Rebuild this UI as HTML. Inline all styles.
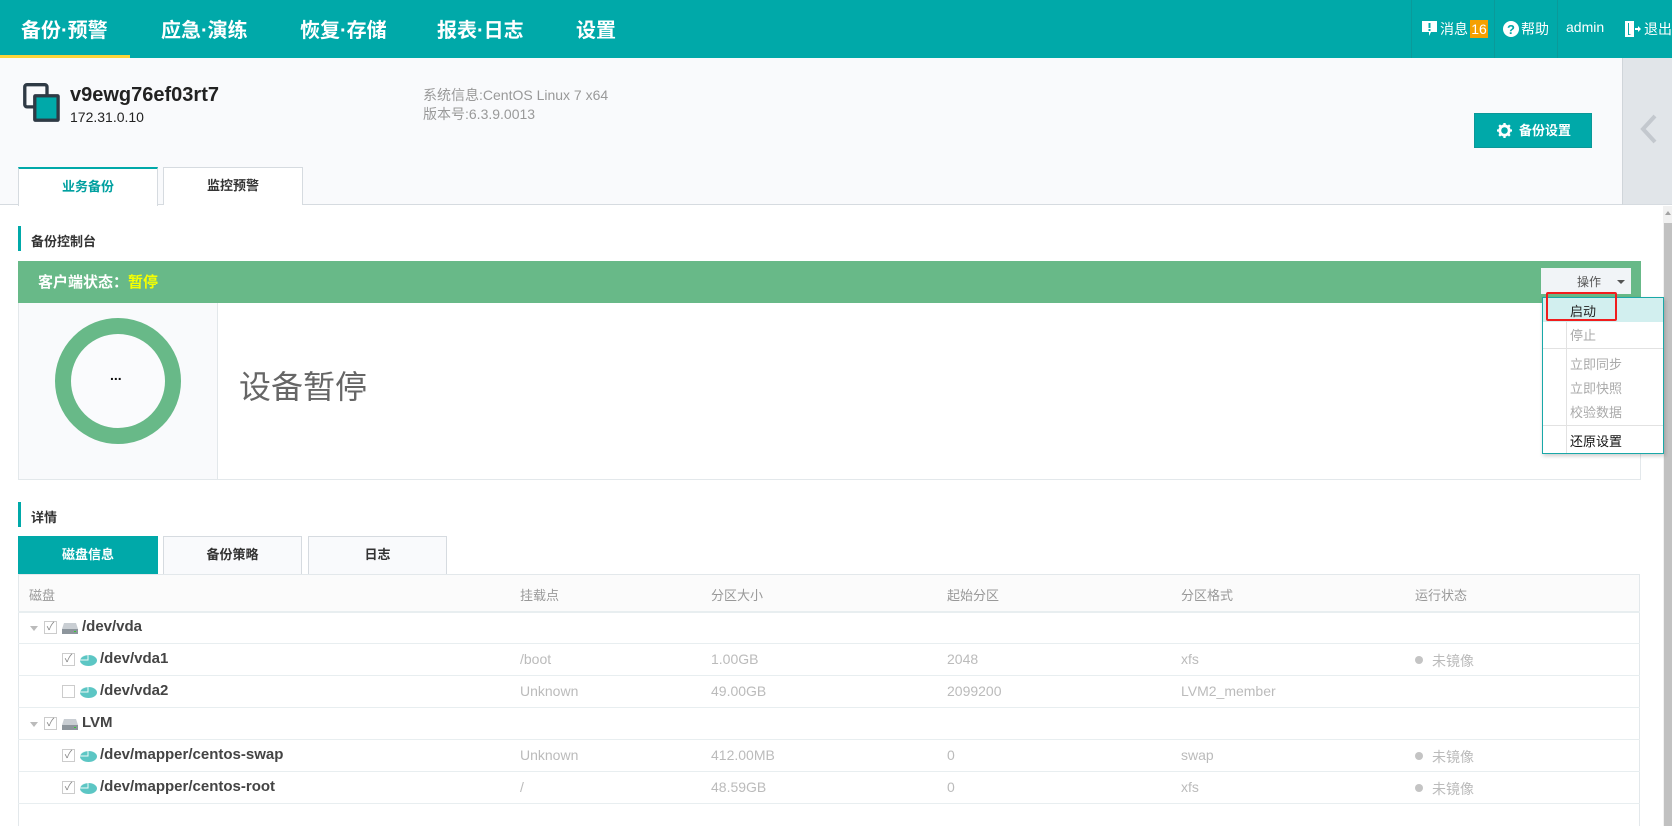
<!DOCTYPE html>
<html><head><meta charset="utf-8"><style>
*{margin:0;padding:0;box-sizing:border-box}
body{width:1672px;height:826px;overflow:hidden;background:#fff;font-family:"Liberation Sans","Noto Sans CJK SC",sans-serif;position:relative;color:#333}
.a{position:absolute;white-space:nowrap}
.nav{font-size:20px;font-weight:bold;color:#fff;top:14px}
.hr{font-size:14px;color:#fff;top:19px}
.th{font-size:13px;color:#999;top:585px}
.td{font-size:14px;color:#bbb}
.nm{font-size:15px;font-weight:bold;color:#444}
.line{position:absolute;left:18px;width:1622px;height:1px;background:#e8eef0}
.cb{position:absolute;width:13px;height:13px;border:1px solid #ccc;background:#fff;font-size:11px;line-height:11px;color:#888;text-align:center}
.dd{font-size:13px;color:#aaa;left:1570px}
</style></head><body>
<!-- header -->
<div class="a" style="left:0;top:0;width:1672px;height:58px;background:#00a9a9"></div>
<div class="a" style="left:0;top:55px;width:130px;height:3px;background:#fcd53a"></div>
<div class="a nav" style="left:21px">备份·预警</div>
<div class="a nav" style="left:161px">应急·演练</div>
<div class="a nav" style="left:300px">恢复·存储</div>
<div class="a nav" style="left:437px">报表·日志</div>
<div class="a nav" style="left:576px">设置</div>
<div class="a" style="left:1411px;top:0;width:1px;height:58px;background:#0a9a9a"></div>
<div class="a" style="left:1494px;top:0;width:1px;height:58px;background:#0a9a9a"></div>
<div class="a" style="left:1557px;top:0;width:1px;height:58px;background:#0a9a9a"></div>
<svg class="a" style="left:1422px;top:21px" width="15" height="16" viewBox="0 0 15 16"><path d="M0 0h15v11H9l-2 4v-4H0z" fill="#fff"/><rect x="6.5" y="2" width="2" height="5" fill="#00a9a9"/><rect x="6.5" y="8" width="2" height="2" fill="#00a9a9"/></svg>
<div class="a hr" style="left:1440px">消息</div>
<div class="a" style="left:1470px;top:20px;width:18px;height:18px;background:#f5a000;color:#fff;font-size:14px;text-align:center;line-height:18px">16</div>
<svg class="a" style="left:1503px;top:21px" width="16" height="16" viewBox="0 0 16 16"><circle cx="8" cy="8" r="8" fill="#fff"/><text x="8" y="13" font-size="13" font-weight="bold" fill="#00a9a9" text-anchor="middle" font-family="Liberation Sans">?</text></svg>
<div class="a hr" style="left:1521px">帮助</div>
<div class="a hr" style="left:1566px">admin</div>
<svg class="a" style="left:1625px;top:21px" width="16" height="16" viewBox="0 0 16 16"><path d="M0 0h9v4H7V2H3v12h4v-2h2v4H0z M4 1l5 2v12l-5-2z" fill="#fff"/><path d="M10 7h3V5l3 3-3 3V9h-3z" fill="#fff"/></svg>
<div class="a hr" style="left:1644px">退出</div>
<!-- top info -->
<div class="a" style="left:0;top:58px;width:1622px;height:147px;background:#f9fafc;border-bottom:1px solid #d6dbe0"></div>
<div class="a" style="left:1622px;top:58px;width:50px;height:147px;background:#e1e5e9;border-left:1px solid #d0d5da;border-bottom:1px solid #d6dbe0"></div>
<svg class="a" style="left:1638px;top:113px" width="20" height="32" viewBox="0 0 20 32"><path d="M17 3L5 16l12 13" stroke="#c3c8ce" stroke-width="4" fill="none"/></svg>
<svg class="a" style="left:23px;top:83px" width="38" height="40" viewBox="0 0 34 36"><rect x="1.5" y="1.5" width="20" height="20" rx="2" fill="none" stroke="#2f3a45" stroke-width="3"/><rect x="9" y="10" width="24" height="25" rx="2" fill="#2f3a45"/><rect x="12" y="13" width="18" height="19" fill="#00a9a9"/></svg>
<div class="a" style="left:70px;top:84px;font-size:20px;font-weight:bold;color:#222">v9ewg76ef03rt7</div>
<div class="a" style="left:70px;top:109px;font-size:14px;color:#222">172.31.0.10</div>
<div class="a" style="left:423px;top:85px;font-size:14px;color:#999">系统信息:CentOS Linux 7 x64</div>
<div class="a" style="left:423px;top:104px;font-size:14px;color:#999">版本号:6.3.9.0013</div>
<div class="a" style="left:1474px;top:113px;width:118px;height:35px;background:#00a9a9;border:1px solid #0b9898;color:#fff;font-size:13px;font-weight:bold;line-height:33px;padding-left:44px">备份设置</div>
<svg class="a" style="left:1497px;top:123px" width="15" height="15" viewBox="0 0 16 16"><circle cx="8" cy="8" r="5" fill="none" stroke="#fff" stroke-width="3"/><g stroke="#fff" stroke-width="2.5"><path d="M8 0v3M8 13v3M0 8h3M13 8h3M2.3 2.3l2.1 2.1M11.6 11.6l2.1 2.1M2.3 13.7l2.1-2.1M11.6 4.4l2.1-2.1"/></g></svg>
<div class="a" style="left:18px;top:167px;width:140px;height:39px;background:#fff;border:1px solid #d6dbe0;border-top:2px solid #00a9a9;border-bottom:none;color:#00a0a0;font-size:13px;font-weight:bold;text-align:center;line-height:36px">业务备份</div>
<div class="a" style="left:163px;top:167px;width:140px;height:38px;background:#fff;border:1px solid #d6dbe0;border-bottom:none;color:#333;font-size:13px;font-weight:bold;text-align:center;line-height:36px">监控预警</div>
<!-- scrollbar -->
<div class="a" style="left:1663px;top:206px;width:9px;height:620px;background:#f1f1f1"></div>
<div class="a" style="left:1664px;top:223px;width:8px;height:603px;background:#c1c1c1"></div>
<div class="a" style="left:1665px;top:211px;width:0;height:0;border-left:3px solid transparent;border-right:3px solid transparent;border-bottom:4px solid #a3a3a3"></div>
<!-- console -->
<div class="a" style="left:18px;top:226px;width:3px;height:25px;background:#00a9a9"></div>
<div class="a" style="left:31px;top:231px;font-size:13px;font-weight:bold;color:#333">备份控制台</div>
<div class="a" style="left:18px;top:261px;width:1623px;height:42px;background:#68b988"></div>
<div class="a" style="left:38px;top:271px;font-size:15px;font-weight:bold;color:#fff">客户端状态：<span style="color:#f6ff00">暂停</span></div>
<div class="a" style="left:18px;top:303px;width:1623px;height:177px;border:1px solid #e3e8eb;border-top:none"></div>
<div class="a" style="left:19px;top:303px;width:199px;height:176px;background:#f9fafc;border-right:1px solid #e3e8eb"></div>
<div class="a" style="left:55px;top:318px;width:126px;height:126px;border-radius:50%;border:16px solid #68b988;background:#fafbfd"></div>
<div class="a" style="left:110px;top:367px;font-size:14px;font-weight:bold;color:#111">...</div>
<div class="a" style="left:239px;top:362px;font-size:32px;color:#666">设备暂停</div>
<!-- ops button & dropdown -->
<div class="a" style="left:1541px;top:268px;width:90px;height:26px;background:#f1f4f7"></div>
<div class="a" style="left:1577px;top:273px;font-size:12px;color:#555">操作</div>
<div class="a" style="left:1617px;top:280px;width:0;height:0;border-left:4px solid transparent;border-right:4px solid transparent;border-top:4px solid #555"></div>
<div class="a" style="left:1542px;top:297px;width:122px;height:157px;background:#fff;border:1px solid #19a8a8;box-shadow:1px 2px 4px rgba(0,0,0,.2)"></div>
<div class="a" style="left:1543px;top:298px;width:120px;height:24px;background:#d2efef"></div>
<div class="a" style="left:1566px;top:322px;width:1px;height:131px;background:#e2e2e2"></div>
<div class="a" style="left:1543px;top:348px;width:120px;height:1px;background:#e2e2e2"></div>
<div class="a" style="left:1543px;top:425px;width:120px;height:1px;background:#e2e2e2"></div>
<div class="a dd" style="top:301px;color:#222">启动</div>
<div class="a" style="left:1546px;top:292px;width:71px;height:29px;border:2px solid #f01d1d;border-radius:2px"></div>
<div class="a dd" style="top:325px">停止</div>
<div class="a dd" style="top:354px">立即同步</div>
<div class="a dd" style="top:378px">立即快照</div>
<div class="a dd" style="top:402px">校验数据</div>
<div class="a dd" style="top:431px;color:#111">还原设置</div>
<!-- details -->
<div class="a" style="left:18px;top:502px;width:3px;height:25px;background:#00a9a9"></div>
<div class="a" style="left:31px;top:507px;font-size:13px;font-weight:bold;color:#333">详情</div>
<div class="a" style="left:18px;top:536px;width:140px;height:38px;background:#00a9a9;color:#fff;font-size:13px;font-weight:bold;text-align:center;line-height:38px">磁盘信息</div>
<div class="a" style="left:163px;top:536px;width:139px;height:38px;background:#f9fafc;border:1px solid #d6dbe0;border-bottom:none;font-size:13px;font-weight:bold;text-align:center;line-height:36px">备份策略</div>
<div class="a" style="left:308px;top:536px;width:139px;height:38px;background:#f9fafc;border:1px solid #d6dbe0;border-bottom:none;font-size:13px;font-weight:bold;text-align:center;line-height:36px">日志</div>
<div class="a" style="left:18px;top:574px;width:1622px;height:252px;border-left:1px solid #e3e8eb;border-right:1px solid #e3e8eb;border-top:1px solid #e3e8eb"></div>
<div class="a" style="left:19px;top:575px;width:1620px;height:36px;background:#fbfbfb"></div>
<div class="line" style="top:611px;height:2px"></div>
<div class="line" style="top:643px"></div><div class="line" style="top:675px"></div><div class="line" style="top:707px"></div><div class="line" style="top:739px"></div><div class="line" style="top:771px"></div><div class="line" style="top:803px"></div>
<div class="a th" style="left:29px">磁盘</div>
<div class="a th" style="left:520px">挂载点</div>
<div class="a th" style="left:711px">分区大小</div>
<div class="a th" style="left:947px">起始分区</div>
<div class="a th" style="left:1181px">分区格式</div>
<div class="a th" style="left:1415px">运行状态</div>

<!-- vda -->
<div class="a" style="left:30px;top:626px;border-left:4px solid transparent;border-right:4px solid transparent;border-top:5px solid #bbb"></div>
<div class="cb" style="left:44px;top:621px">✓</div>
<svg class="a" style="left:62px;top:622px" width="16" height="12" viewBox="0 0 16 12"><path d="M2 1h12l2 6v5H0V7z" fill="#c9ced3"/><rect x="0" y="7" width="16" height="5" fill="#8d959c"/><rect x="12" y="9" width="2" height="1" fill="#3c3"/></svg>
<div class="a nm" style="left:82px;top:618px">/dev/vda</div>
<!-- vda1 -->
<div class="cb" style="left:62px;top:653px">✓</div>
<svg class="a" style="left:80px;top:655px" width="17" height="11" viewBox="0 0 17 11"><ellipse cx="8.5" cy="5.5" rx="8.5" ry="5.5" fill="#5cc6c4"/><path d="M8.5 5.5V0A8.5 5.5 0 0 0 0 5.5z" fill="#fff" opacity=".9"/><path d="M7.5 4.5V0.2A8 5 0 0 0 0.5 4.5z" fill="#5cc6c4"/></svg>
<div class="a nm" style="left:100px;top:650px">/dev/vda1</div>
<div class="a td" style="left:520px;top:651px">/boot</div><div class="a td" style="left:711px;top:651px">1.00GB</div><div class="a td" style="left:947px;top:651px">2048</div><div class="a td" style="left:1181px;top:651px">xfs</div>
<div class="a" style="left:1415px;top:656px;width:8px;height:8px;border-radius:50%;background:#c4c4c4"></div><div class="a td" style="left:1432px;top:651px">未镜像</div>
<!-- vda2 -->
<div class="cb" style="left:62px;top:685px"></div>
<svg class="a" style="left:80px;top:687px" width="17" height="11" viewBox="0 0 17 11"><ellipse cx="8.5" cy="5.5" rx="8.5" ry="5.5" fill="#5cc6c4"/><path d="M8.5 5.5V0A8.5 5.5 0 0 0 0 5.5z" fill="#fff" opacity=".9"/><path d="M7.5 4.5V0.2A8 5 0 0 0 0.5 4.5z" fill="#5cc6c4"/></svg>
<div class="a nm" style="left:100px;top:682px">/dev/vda2</div>
<div class="a td" style="left:520px;top:683px">Unknown</div><div class="a td" style="left:711px;top:683px">49.00GB</div><div class="a td" style="left:947px;top:683px">2099200</div><div class="a td" style="left:1181px;top:683px">LVM2_member</div>
<!-- LVM -->
<div class="a" style="left:30px;top:722px;border-left:4px solid transparent;border-right:4px solid transparent;border-top:5px solid #bbb"></div>
<div class="cb" style="left:44px;top:717px">✓</div>
<svg class="a" style="left:62px;top:718px" width="16" height="12" viewBox="0 0 16 12"><path d="M2 1h12l2 6v5H0V7z" fill="#c9ced3"/><rect x="0" y="7" width="16" height="5" fill="#8d959c"/><rect x="12" y="9" width="2" height="1" fill="#3c3"/></svg>
<div class="a nm" style="left:82px;top:714px">LVM</div>
<!-- swap -->
<div class="cb" style="left:62px;top:749px">✓</div>
<svg class="a" style="left:80px;top:751px" width="17" height="11" viewBox="0 0 17 11"><ellipse cx="8.5" cy="5.5" rx="8.5" ry="5.5" fill="#5cc6c4"/><path d="M8.5 5.5V0A8.5 5.5 0 0 0 0 5.5z" fill="#fff" opacity=".9"/><path d="M7.5 4.5V0.2A8 5 0 0 0 0.5 4.5z" fill="#5cc6c4"/></svg>
<div class="a nm" style="left:100px;top:746px">/dev/mapper/centos-swap</div>
<div class="a td" style="left:520px;top:747px">Unknown</div><div class="a td" style="left:711px;top:747px">412.00MB</div><div class="a td" style="left:947px;top:747px">0</div><div class="a td" style="left:1181px;top:747px">swap</div>
<div class="a" style="left:1415px;top:752px;width:8px;height:8px;border-radius:50%;background:#c4c4c4"></div><div class="a td" style="left:1432px;top:747px">未镜像</div>
<!-- root -->
<div class="cb" style="left:62px;top:781px">✓</div>
<svg class="a" style="left:80px;top:783px" width="17" height="11" viewBox="0 0 17 11"><ellipse cx="8.5" cy="5.5" rx="8.5" ry="5.5" fill="#5cc6c4"/><path d="M8.5 5.5V0A8.5 5.5 0 0 0 0 5.5z" fill="#fff" opacity=".9"/><path d="M7.5 4.5V0.2A8 5 0 0 0 0.5 4.5z" fill="#5cc6c4"/></svg>
<div class="a nm" style="left:100px;top:778px">/dev/mapper/centos-root</div>
<div class="a td" style="left:520px;top:779px">/</div><div class="a td" style="left:711px;top:779px">48.59GB</div><div class="a td" style="left:947px;top:779px">0</div><div class="a td" style="left:1181px;top:779px">xfs</div>
<div class="a" style="left:1415px;top:784px;width:8px;height:8px;border-radius:50%;background:#c4c4c4"></div><div class="a td" style="left:1432px;top:779px">未镜像</div>
</body></html>
